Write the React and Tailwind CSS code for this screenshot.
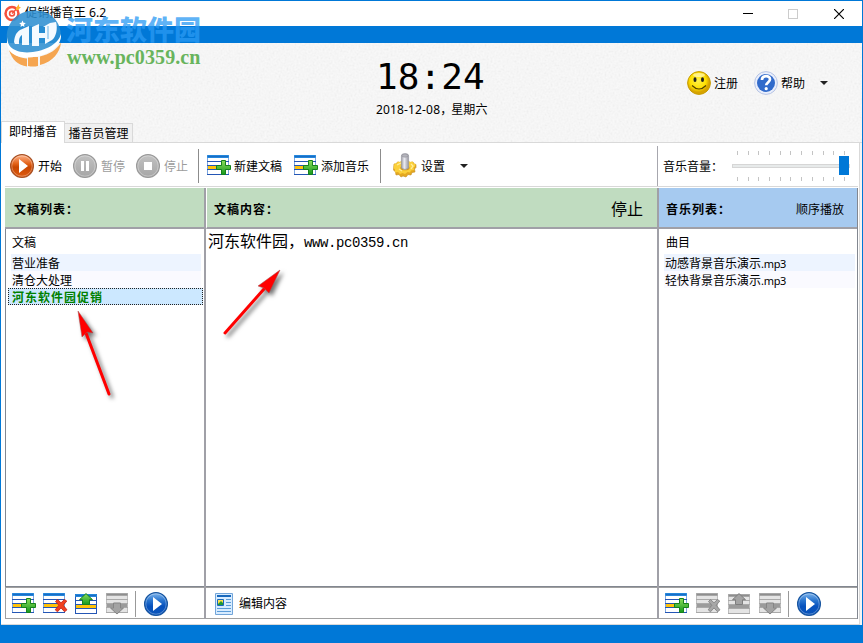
import { useState } from "react";

const scripts = ["营业准备", "清仓大处理", "河东软件园促销"];
const songs = ["动感背景音乐演示", "轻快背景音乐演示"];

function TableIcon({ type, disabled = false }) {
  const line = disabled ? "#a9a9a9" : "#2456b5";
  const bar = disabled ? "#9b9b9b" : "#ffc20a";
  const top = disabled ? "#a6a6a6" : "#2387dc";
  const y = type === "up" ? 1 : 0;
  return (
    <svg width="25" height="22" viewBox="0 0 25 22" className="block shrink-0">
      <rect x="0.5" y={y + 0.5} width="21" height="19" fill={disabled ? "#e4e4e4" : "#fff"} stroke={disabled ? "#bdbdbd" : type === "up" ? "#2456b5" : "#7da6df"} />
      <rect x="0" y={y} width="22" height="3" rx="1" fill={top} />
      <rect x="1" y={y + 1} width="20" height="1" fill={disabled ? "#8e8e8e" : "#1a6cc4"} />
      <rect x="0" y={y + 6} width="22" height="1" fill={line} />
      <rect x="0" y={y + 10} width="22" height="1" fill={line} />
      <rect x="1" y={y + 11} width="20" height="3" fill={bar} />
      <rect x="0" y={y + 14} width="22" height="1" fill={line} />
      <rect x="0" y={y + 19} width="22" height="1" fill={line} />
      {type === "add" && (
        <path d="M14.5 5.5h4v5h5v4h-5v5h-4v-5h-5v-4h5z" fill="url(#greenFill)" stroke="#16821c" />
      )}
      {type === "remove" && (
        <path d="M12.5 8.5l2-2 3.5 3.3 3.5-3.3 2.3 1.6-3.6 4.2 3.8 4.5-2.4 2-3.6-3.9-3.5 3.9-2.3-2 3.6-4.5z"
          fill={disabled ? "#a7a7a7" : "#f04020"} stroke={disabled ? "#7e7e7e" : "#c21e13"} strokeWidth="0.8" />
      )}
      {type === "up" && (
        <path d="M11 .6l6.5 6.1h-3v4.8h-7V6.7h-3z" fill={disabled ? "#a3a3a3" : "url(#greenFill)"} stroke={disabled ? "#7e7e7e" : "#16821c"} />
      )}
      {type === "down" && (
        <path d="M7.5 10h7v5h3L11 21l-6.5-6h3z" fill="#a3a3a3" stroke="#858585" />
      )}
    </svg>
  );
}

function RoundIcon({ type, color = "gray" }) {
  return (
    <svg width="24" height="24" viewBox="0 0 24 24" className="block shrink-0">
      <circle cx="12" cy="12" r="11.4" fill={`url(#${color}Ball)`} stroke={color === "orange" ? "#a65024" : color === "blue" ? "#15539e" : "#999"} strokeWidth="1.2" />
      <circle cx="12" cy="12" r="10.2" fill="none" stroke="#fff" strokeOpacity="0.3" />
      {type === "play" && <path d="M9 5v14l9-7z" fill="#fff" />}
      {type === "pause" && <path d="M8 7h3v10H8zM13 7h3v10h-3z" fill="#fff" />}
      {type === "stop" && <path d="M8 8h8v8H8z" fill="#fff" />}
    </svg>
  );
}

function GearIcon() {
  return (
    <svg width="24" height="26" viewBox="0 0 24 26" className="block shrink-0">
      <path d="M1 11h2l1.5-2 2.5.5L9 8h6l2 1.5 3-.5 1 2 2 .5v3l-1.5 1.5.5 3-3 .5-1 2.5-3-.5-2 2.5-3-1-2 1-2-2.5-3 .5-.5-3L.5 17z" fill="#e5a920" stroke="#c48b1c" strokeWidth="0.6" />
      <path d="M1.5 10.5h2l1.5-2 2 .5 2-1.5h6l2 1.5 2.5-.5 1 2 2 .5-.5 2.5-1.5 1 .5 2.500-3 .5-1 2-2.500-.5-2.500 2-2.500-1-2.500 1-2-2-3 .5v-3l-1.500-1.500z" fill="#fbd03a" />
      <path d="M4 12l4-2M6 16l3 2M18 11l2 2-2 3" fill="none" stroke="#ffed9a" strokeWidth="1.3" />
      <ellipse cx="12" cy="15" rx="4.6" ry="2.3" fill="#d39a1c" />
      <path d="M8.400 3Q8.400.6 12 .6T15.600 3v12q-3.600 3-7.200 0z" fill="url(#steel)" stroke="#9a9aa2" strokeWidth="0.7" />
      <ellipse cx="12" cy="2.600" rx="3" ry="1.600" fill="#b4b4bc" stroke="#85858d" strokeWidth="0.5" />
    </svg>
  );
}

function Gradients() {
  return (
    <svg width="0" height="0" className="absolute">
      <defs>
        <linearGradient id="greenFill" x2="0" y2="1">
          <stop stopColor="#8bdd5b" /><stop offset="1" stopColor="#14981d" />
        </linearGradient>
        <linearGradient id="orangeBall" x2="0" y2="1">
          <stop stopColor="#ffb690" /><stop offset=".4" stopColor="#e36218" /><stop offset=".55" stopColor="#c84600" /><stop offset="1" stopColor="#e05d12" />
        </linearGradient>
        <linearGradient id="grayBall" x2="0" y2="1">
          <stop stopColor="#c2c2c2" /><stop offset="1" stopColor="#a6a6a6" />
        </linearGradient>
        <linearGradient id="blueBall" x2="0" y2="1">
          <stop stopColor="#83b8ed" /><stop offset=".35" stopColor="#2874cf" /><stop offset=".6" stopColor="#0651bd" /><stop offset="1" stopColor="#0b55b9" />
        </linearGradient>
        <linearGradient id="steel">
          <stop stopColor="#9b9ba4" /><stop offset=".4" stopColor="#ececf2" /><stop offset="1" stopColor="#9696a0" />
        </linearGradient>
        <radialGradient id="yellowBall" cx=".45" cy=".4">
          <stop stopColor="#fff14b" /><stop offset=".7" stopColor="#ffe000" /><stop offset="1" stopColor="#d7a300" />
        </radialGradient>
      </defs>
    </svg>
  );
}

function Watermark() {
  return (
    <div className="absolute left-[-1px] top-[-1px] w-[210px] h-[72px] pointer-events-none">
      <svg width="66" height="70" viewBox="0 0 66 70" className="absolute left-0 top-0">
        <path d="M7 40C5 24 17 10.5 35 10.5c16 0 26 11 26 26C60 47 47 54 32 55 18 56 8 50 7 40z" fill="#2f8fd2" fillOpacity=".88" />
        <path d="M9 50c6 6 12 8 18 8.500v8C18 65 12 60 9 50zM40 56.500c9-2 17-7 21-14-1 10-8 19-21 22.500z" fill="#f5a550" />
        <path d="M28 57h10v9q-5 1-10 0z" fill="#f5a550" />
        <path d="M8 37c-2 9 6 15 19 15.500C43 52 58 45 61 34c1 13-13 22-32 23.500C16 58.500 3 51 8 37z" fill="#fff" />
        <path d="M14 42c1-7 2-9 6-12l9-4v19h-7V35c-3 2-3 5-3 9h-4z" fill="#f4faff" />
        <path d="M32 27l7-3v9h6v5h-6v8h-7z" fill="#f4faff" />
        <path d="M43 27l7-4 6-1c2 7 0 15-4 18l-7 4v-6h-3v-5h3v-6z" fill="#f4faff" />
        <path d="M48 26v13" stroke="#6ab4e6" strokeWidth="1" />
        <path d="M22.500 20.500l1 2.300 2.300.3-1.800 1.600.5 2.300-2-1.200-2 1.200.5-2.300-1.800-1.600 2.300-.3z" fill="#fff" />
      </svg>
      <div className="absolute left-[66px] top-[16px] text-[27px] leading-[25px] font-black whitespace-nowrap text-[#2a9af3]/75 font-['Noto_Sans_CJK_SC',sans-serif]">河东软件园</div>
      <div className="absolute left-[67px] top-[45px] text-[20px] leading-[24px] font-bold whitespace-nowrap tracking-[0.1px] text-[#68b45d] font-['Liberation_Serif',serif]">www.pc0359.cn</div>
    </div>
  );
}

function Ticks() {
  return (
    <div className="flex justify-between w-[108px] ml-[5px]">
      {Array.from({ length: 11 }, (_, i) => <i key={i} className="w-px h-[4px] bg-[#c4c4c4]" />)}
    </div>
  );
}

function Caret() {
  return <i className="w-0 h-0 border-x-4 border-x-transparent border-t-4 border-t-[#222]" />;
}

function Arrow({ head, x1, y1, x2, y2 }) {
  return (
    <svg width="863" height="643" className="absolute left-0 top-0 pointer-events-none drop-shadow-[3px_3px_2px_rgba(0,0,0,0.55)]">
      <path d={`M${x1} ${y1}L${x2} ${y2}`} stroke="#f00" strokeWidth="3" strokeLinecap="round" />
      <path d={head} fill="#f00" stroke="#a05050" strokeWidth="0.5" />
    </svg>
  );
}

export default function App() {
  const [selected, setSelected] = useState(2);
  const [tab, setTab] = useState(0);

  return (
    <div className="relative w-[863px] h-[643px] overflow-hidden border border-[#0078d7] bg-[#f5f5f5] text-black text-[12px] leading-[16px] whitespace-nowrap flex flex-col font-['Noto_Sans','Noto_Sans_CJK_SC',sans-serif]">
      <Gradients />

      <header className="h-[25px] shrink-0 bg-white flex items-center pl-[3px]">
        <svg width="17" height="18" viewBox="0 0 17 18" className="mt-[-2px]">
          <circle cx="8" cy="9.5" r="7.7" fill="#f4513e" /><circle cx="8" cy="9.5" r="4.2" fill="none" stroke="#fff" strokeWidth="2" />
          <circle cx="8" cy="9.5" r="1.6" fill="#fff" /><path d="M8 9.5l7-7" stroke="#f4513e" strokeWidth="1.5" /><path d="M12 4l3-4v3h2l-3 3h-2z" fill="#ffb52d" />
        </svg>
        <span className="ml-[4px] mt-[-2px] text-[12.2px]">促销播音王 6.2</span>
        <div className="ml-auto mr-[18px] flex items-center gap-[36px]">
          <i className="w-[10px] h-px bg-black mr-[-1px]" />
          <i className="size-[10px] border border-[#ccc]" />
          <svg width="10" height="10" viewBox="0 0 10 10"><path d="M0 0l10 10M10 0L0 10" stroke="#000" strokeWidth="1.2" /></svg>
        </div>
      </header>
      <div className="h-[17px] shrink-0 bg-[#0078d7]" />

      <section className="relative h-[100px] shrink-0 border-b border-[#d9d9d9] flex bg-[#fafafa]">
        <svg width="861" height="99" className="absolute left-0 top-0 opacity-[0.15]">
          <filter id="paper"><feTurbulence type="fractalNoise" baseFrequency="0.5" numOctaves="2" /><feColorMatrix type="saturate" values="0" /></filter>
          <rect width="861" height="99" filter="url(#paper)" />
        </svg>
        <div className="relative w-[375px] flex items-end">
          <button onClick={() => setTab(0)} className="h-[22px] w-[64px] mb-[-1px] bg-white border border-b-0 border-[#d9d9d9] flex items-center justify-center pb-px">即时播音</button>
          <button onClick={() => setTab(1)} className={`h-[19px] w-[68px] border border-l-0 border-b-0 border-[#d9d9d9] flex items-center justify-center pt-[2px] ${tab === 1 ? "bg-white" : "bg-[#f0f0f0]"}`}>播音员管理</button>
        </div>
        <div className="relative w-[114px] pt-[13px] flex flex-col">
          <div className="text-[36px] leading-[42px] tracking-[0.1px] font-['DejaVu_Sans_Mono',monospace]">18:24</div>
          <div className="leading-[16px] mt-[3px] tracking-[0.15px]">2018-12-08<span className="inline-block w-[11px] font-['Noto_Sans_CJK_SC']">，</span>星期六</div>
        </div>
        <div className="relative ml-auto mr-[34px] h-[24px] mt-[28px] flex items-center">
          <svg width="24" height="24" viewBox="0 0 24 24">
            <circle cx="12" cy="12" r="11.4" fill="url(#yellowBall)" stroke="#c79c00" /><ellipse cx="12" cy="4" rx="6" ry="2" fill="#fff" opacity=".5" />
            <ellipse cx="8" cy="8.7" rx="1.5" ry="2.4" fill="#222" /><ellipse cx="15.5" cy="8.7" rx="1.5" ry="2.4" fill="#222" />
            <path d="M5 14.5q7 7 14 0" fill="none" stroke="#514000" strokeWidth="1.1" />
          </svg>
          <span className="ml-[3px] mt-[2px]">注册</span>
          <svg width="24" height="24" viewBox="0 0 24 24" className="ml-[16px]">
            <circle cx="12" cy="12" r="11.4" fill="#e9eefb" stroke="#b6c4e5" /><circle cx="12" cy="12" r="9" fill="#316bcb" />
            <path d="M8 9c0-5 8-5 8-.8 0 3-3.8 3.4-3.8 6" fill="none" stroke="#fff" strokeWidth="2.7" /><circle cx="12.2" cy="17.7" r="1.6" fill="#fff" />
          </svg>
          <span className="ml-[3px] mr-[15px] mt-[2px]">帮助</span>
          <Caret />
        </div>
      </section>

      <main className="h-[482px] shrink-0 mr-[2px] border-r border-b border-[#d9d9d9] bg-white pl-[4px] pr-px flex flex-col">
        <div className="h-[44px] shrink-0 flex border-b border-[#d8d8d8]">
          <div className="w-[652px] flex items-center pt-[3px] pl-[5px]">
            <RoundIcon type="play" color="orange" /><span className="ml-[4px] mt-[2px]">开始</span>
            <span className="ml-[11px]"><RoundIcon type="pause" /></span><span className="ml-[4px] mt-[2px] text-[#9c9c9c]">暂停</span>
            <span className="ml-[11px]"><RoundIcon type="stop" /></span><span className="ml-[4px] mt-[2px] text-[#9c9c9c]">停止</span>
            <i className="w-px h-[34px] bg-[#8c8c8c] ml-[10px] mr-[8px]" />
            <TableIcon type="add" /><span className="ml-[2px] mt-[2px]">新建文稿</span>
            <span className="ml-[12px]"><TableIcon type="add" /></span><span className="ml-[2px] mt-[2px]">添加音乐</span>
            <i className="w-px h-[34px] bg-[#8c8c8c] ml-[11px] mr-[12px]" />
            <GearIcon /><span className="ml-[4px] mr-[15px] mt-[2px]">设置</span><Caret />
          </div>
          <div className="flex-1 mt-[3px] border-l border-[#a7a7ae] flex items-start">
            <span className="ml-[5px] mt-[13px] w-[69px]">音乐音量：</span>
            <div className="relative pt-[5px]">
              <Ticks />
              <div className="my-[9px] w-[118px] h-[4px] border border-[#d6d6d6] bg-[#e7eaea]" />
              <Ticks />
              <i className="absolute left-[107px] top-[10px] w-[10px] h-[19px] bg-[#0078d7]" />
            </div>
          </div>
        </div>

        <div className="h-[431px] mt-px flex">
          <section className="w-[201px] flex flex-col border-r-2 border-[#a0a0a7]">
            <h2 className="h-[41px] shrink-0 bg-[#c0dcc0] border-b-2 border-[#a0a0a7] pl-[9px] pt-[4px] flex items-center font-bold tracking-[1px]">文稿列表：</h2>
            <div className="h-[358px] shrink-0 border-l border-b border-[#828790] pt-[5px]">
              <div className="h-[20px] pl-[6px] pt-px">文稿</div>
              {scripts.map((item, i) => (
                <div key={item} onClick={() => setSelected(i)}
                  className={`h-[17px] flex items-center ${i === selected ? "ml-[2px] mr-px pl-[3px] pt-[2px] border border-dotted border-[#222] bg-[#cce8ff] text-[#008000] font-bold tracking-[1px]" : i === 0 ? "ml-[5px] mr-[3px] pl-px pt-[2px] bg-[#edf4ff]" : "ml-[5px] mr-[3px] pl-px pt-[2px] bg-[#fafaff]"}`}>{item}</div>
              ))}
            </div>
            <div className="h-[32px] border-l border-y border-[#a0a0a0] pl-[6px] pt-[2px] flex items-center">
              <TableIcon type="add" /><span className="ml-[6px]"><TableIcon type="remove" /></span>
              <span className="ml-[7px]"><TableIcon type="up" /></span><span className="ml-[6px]"><TableIcon type="down" disabled /></span>
              <i className="w-px h-[26px] bg-[#999] ml-[4px] mr-[8px]" /><RoundIcon type="play" color="blue" />
            </div>
          </section>

          <section className="w-[453px] flex flex-col border-r-2 border-[#a0a0a7]">
            <h2 className="h-[41px] shrink-0 bg-[#c0dcc0] border-l border-l-white border-b-2 border-b-[#a0a0a7] pl-[7px] pr-[14px] pt-[4px] flex items-center font-bold tracking-[1px]">
              文稿内容：<span className="ml-auto mt-[-2px] text-[16px] font-normal tracking-normal">停止</span>
            </h2>
            <div className="h-[358px] shrink-0 border-b border-[#828790] pl-[2px] pt-px text-[16px] leading-[20px] font-['Noto_Sans_CJK_SC',sans-serif]">
              河东软件园，<span className="text-[14px] tracking-[-0.4px] font-['Liberation_Mono',monospace]">www.pc0359.cn</span>
            </div>
            <div className="h-[32px] border-y border-[#a0a0a0] flex items-center pl-[9px] pt-[2px]">
              <svg width="18" height="22" viewBox="0 0 18 22">
                <path d="M.5.5h17v21H.5z" fill="#d8ecff" stroke="#72a5d9" /><path d="M11 6.5h5M11 9.5h5M11 12.5h5M2 15.5h14M2 18.5h14" stroke="#5b9cd8" /><path d="M2 3h14" stroke="#1768bd" strokeWidth="2" />
                <path d="M2.5 6.5h6v6h-6z" fill="#ffe04a" stroke="#1768bd" /><path d="M3 11l3-3 2 2v2H3z" fill="#239a35" />
              </svg>
              <span className="ml-[6px]">编辑内容</span>
            </div>
          </section>

          <section className="w-[199px] flex flex-col border-r border-[#828790]">
            <h2 className="h-[41px] shrink-0 bg-[#a6caf0] border-b-2 border-[#a0a0a7] pl-[7px] pr-[13px] pt-[4px] flex items-center font-bold tracking-[1px]">音乐列表：<span className="ml-auto font-normal tracking-normal">顺序播放</span></h2>
            <div className="h-[358px] shrink-0 border-b border-[#828790] pt-[5px] pl-[5px] pr-[2px]">
              <div className="h-[20px] pl-[2px] pt-px">曲目</div>
              {songs.map((song, i) => <div key={song} className={`h-[17px] pl-px pt-[2px] flex items-center ${i === 0 ? "bg-[#edf4ff]" : "bg-[#fafaff]"}`}>{song}<span className="text-[11px] tracking-[-0.3px]">.mp3</span></div>)}
            </div>
            <div className="h-[32px] border-y border-[#a0a0a0] pl-[6px] pt-[2px] flex items-center">
              <TableIcon type="add" /><span className="ml-[6px]"><TableIcon type="remove" disabled /></span>
              <span className="ml-[7px]"><TableIcon type="up" disabled /></span><span className="ml-[6px]"><TableIcon type="down" disabled /></span>
              <i className="w-px h-[26px] bg-[#999] ml-[4px] mr-[8px]" /><RoundIcon type="play" color="blue" />
            </div>
          </section>
        </div>
      </main>
      <footer className="flex-1 bg-[#0078d7]" />

      <Watermark />
      <Arrow x1={108} y1={393} x2={85} y2={332} head="M77 310l15 22-6-1-5 5z" />
      <Arrow x1={224} y1={332} x2={263} y2={288} head="M279 269l-11 23-5-5-6-2z" />
    </div>
  );
}
